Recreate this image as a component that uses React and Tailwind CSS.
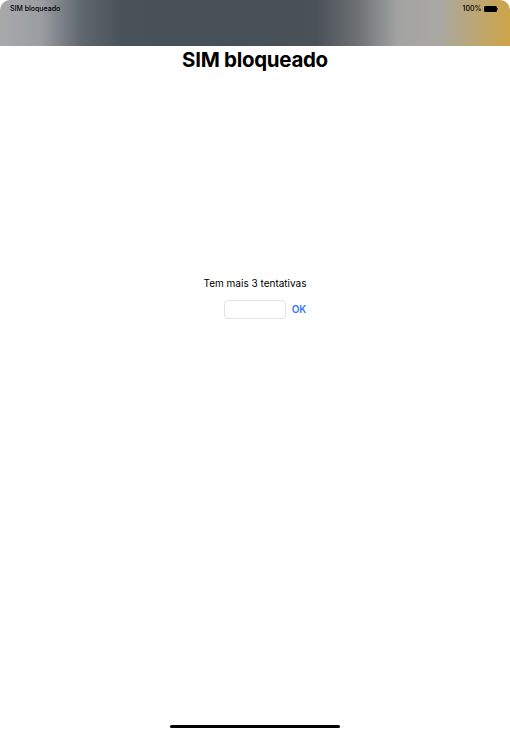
import React from "react";

const App = () => {
  return (
    <div
      className="w-[510px] h-[733px] bg-white flex flex-col overflow-hidden"
      style={{ fontFamily: "Inter, 'Liberation Sans', sans-serif" }}
    >
      {/* Status bar / wallpaper strip */}
      <div className="h-[46px] rounded-t-[10px] bg-[linear-gradient(90deg,#a9a9a9_0%,#9a9ea2_8%,#5f666d_16%,#4a5259_24%,#475057_45%,#4a5157_62%,#6c7073_70%,#a3a3a2_78%,#a9a8a4_86%,#b8a77c_92%,#cda448_100%)] flex justify-between items-start px-[10px] pt-[4px]">
        <span className="text-[7px] leading-[10px] font-medium text-black">SIM bloqueado</span>
        <div className="flex items-center gap-[2px] pr-[2px]">
          <span className="text-[7px] leading-[10px] font-medium text-black">100%</span>
          <div className="flex items-center">
            <div className="w-[13px] h-[6px] rounded-[1.5px] bg-black" />
            <div className="w-[1px] h-[2px] bg-black/50 ml-[0.5px]" />
          </div>
        </div>
      </div>

      <h1 className="text-center text-[20.5px] leading-[26px] font-bold text-black mt-[1px] tracking-[-0.3px]">
        SIM bloqueado
      </h1>

      <div className="flex flex-col items-center mt-[203px]">
        <p className="text-[10px] leading-[14px] text-black">Tem mais 3 tentativas</p>
        <div className="flex items-center gap-[6px] mt-[10px] ml-[20px]">
          <div className="w-[62px] h-[19px] rounded-[4px] border border-[#e3e3e3] bg-white" />
          <span className="text-[10px] font-semibold text-[#3478f6]">OK</span>
        </div>
      </div>

      <div className="flex-1" />
      <div className="flex justify-center pb-[5px]">
        <div className="w-[170px] h-[3.5px] rounded-full bg-black" />
      </div>
    </div>
  );
};

export default App;
